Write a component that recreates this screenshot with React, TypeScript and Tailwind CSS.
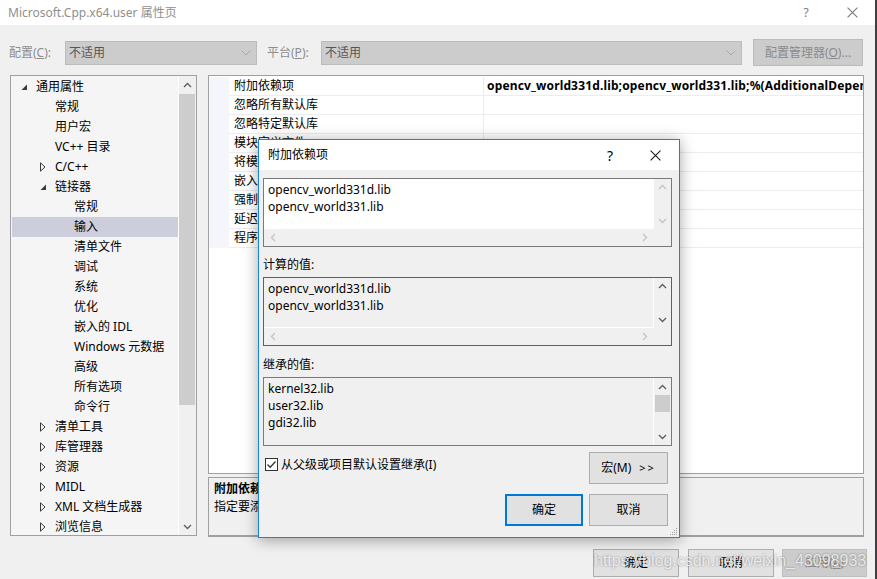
import React from "react";

const FONT = "font-['Noto_Sans','Noto_Sans_CJK_SC',sans-serif]";

function ChevUp({ color }: { color: string }) {
  return (
    <svg width="9" height="6" viewBox="0 0 9 6">
      <path d="M1 5L4.5 1.5L8 5" fill="none" stroke={color} strokeWidth="1.4" />
    </svg>
  );
}
function ChevDown({ color }: { color: string }) {
  return (
    <svg width="9" height="6" viewBox="0 0 9 6">
      <path d="M1 1L4.5 4.5L8 1" fill="none" stroke={color} strokeWidth="1.4" />
    </svg>
  );
}
function ChevLeft({ color }: { color: string }) {
  return (
    <svg width="6" height="9" viewBox="0 0 6 9">
      <path d="M5 1L1.5 4.5L5 8" fill="none" stroke={color} strokeWidth="1.4" />
    </svg>
  );
}
function ChevRight({ color }: { color: string }) {
  return (
    <svg width="6" height="9" viewBox="0 0 6 9">
      <path d="M1 1L4.5 4.5L1 8" fill="none" stroke={color} strokeWidth="1.4" />
    </svg>
  );
}
function SelectChev() {
  return (
    <svg width="10" height="6" viewBox="0 0 10 6">
      <path d="M0.5 0.5L5 5L9.5 0.5" fill="none" stroke="#a8a8a8" strokeWidth="1" />
    </svg>
  );
}
function CloseX({ color, size }: { color: string; size: number }) {
  return (
    <svg width={size} height={size} viewBox="0 0 10 10">
      <path d="M0.5 0.5L9.5 9.5M9.5 0.5L0.5 9.5" fill="none" stroke={color} strokeWidth="1" />
    </svg>
  );
}

type TreeItem = { label: string; level: number; icon?: "open" | "closed"; sel?: boolean };

const tree: TreeItem[] = [
  { label: "通用属性", level: 0, icon: "open" },
  { label: "常规", level: 1 },
  { label: "用户宏", level: 1 },
  { label: "VC++ 目录", level: 1 },
  { label: "C/C++", level: 1, icon: "closed" },
  { label: "链接器", level: 1, icon: "open" },
  { label: "常规", level: 2 },
  { label: "输入", level: 2, sel: true },
  { label: "清单文件", level: 2 },
  { label: "调试", level: 2 },
  { label: "系统", level: 2 },
  { label: "优化", level: 2 },
  { label: "嵌入的 IDL", level: 2 },
  { label: "Windows 元数据", level: 2 },
  { label: "高级", level: 2 },
  { label: "所有选项", level: 2 },
  { label: "命令行", level: 2 },
  { label: "清单工具", level: 1, icon: "closed" },
  { label: "库管理器", level: 1, icon: "closed" },
  { label: "资源", level: 1, icon: "closed" },
  { label: "MIDL", level: 1, icon: "closed" },
  { label: "XML 文档生成器", level: 1, icon: "closed" },
  { label: "浏览信息", level: 1, icon: "closed" },
];

const pads = ["pl-[9px]", "pl-[28px]", "pl-[47px]"];

const props = [
  "附加依赖项",
  "忽略所有默认库",
  "忽略特定默认库",
  "模块定义文件",
  "将模块添加到程序集",
  "嵌入托管资源文件",
  "强制符号引用",
  "延迟加载的 DLL",
  "程序集链接资源",
];

function TreeIcon({ kind }: { kind?: "open" | "closed" }) {
  if (kind === "open")
    return (
      <svg width="7" height="7" viewBox="0 0 7 7">
        <polygon points="6,0.5 6,6 0.5,6" fill="#3a3a3a" />
      </svg>
    );
  if (kind === "closed")
    return (
      <svg width="6" height="10" viewBox="0 0 6 10">
        <polygon points="0.5,0.8 5,5 0.5,9.2" fill="none" stroke="#3a3a3a" strokeWidth="1" />
      </svg>
    );
  return null;
}

function Btn({ children, className }: { children: React.ReactNode; className: string }) {
  return (
    <div className={`flex items-center justify-center bg-[#e1e1e1] border border-[#adadad] text-[12px] text-black ${className}`}>
      {children}
    </div>
  );
}

export default function App() {
  return (
    <div className={`w-[877px] h-[579px] flex bg-[#f0f0f0] text-[12px] text-black relative overflow-hidden ${FONT}`}>
      <div className="w-[875px] flex flex-col">
        {/* Title bar */}
        <div className="h-[25px] bg-white flex items-center pl-[8px] text-[#8f8f8f]">
          <span className="flex-1">Microsoft.Cpp.x64.user 属性页</span>
          <span className="w-[12px] text-center text-[#7a7a7a]">?</span>
          <span className="ml-[35px] mr-[17px] flex items-center">
            <CloseX color="#7a7a7a" size={11} />
          </span>
        </div>

        {/* Toolbar */}
        <div className="h-[50px] flex items-start pt-[14px] pl-[9px]">
          <div className="h-[27px] flex items-center">
            <span className="w-[56px] text-[#8d8d8d]">
              配置(<u>C</u>):
            </span>
            <div className="w-[192px] h-[24px] bg-[#cccccc] border border-[#bcbcbc] flex items-center pl-[3px] pr-[5px] text-[#555555]">
              <span className="flex-1">不适用</span>
              <SelectChev />
            </div>
            <span className="ml-[10px] w-[54px] text-[#8d8d8d]">
              平台(<u>P</u>):
            </span>
            <div className="w-[421px] h-[24px] bg-[#cccccc] border border-[#bcbcbc] flex items-center pl-[3px] pr-[5px] text-[#555555]">
              <span className="flex-1">不适用</span>
              <SelectChev />
            </div>
            <div className="ml-[11px] w-[110px] h-[27px] bg-[#cccccc] border border-[#bcbcbc] flex items-center justify-center text-[#8a8a8a]">
              配置管理器(<u>O</u>)...
            </div>
          </div>
        </div>

        {/* Content */}
        <div className="h-[462px] flex pl-[10px]">
          {/* Tree */}
          <div className="w-[187px] h-[461px] border border-[#a0a0a0] bg-[#f5f5f5] flex overflow-hidden">
            <div className="flex-1 pt-[1px] overflow-hidden">
              {tree.map((t, i) => (
                <div
                  key={i}
                  className={`h-[20px] ml-[1px] flex items-center whitespace-nowrap ${pads[t.level]} ${t.sel ? "bg-[#cccedb]" : ""}`}
                >
                  <span className="w-[15px] flex items-center">
                    <TreeIcon kind={t.icon} />
                  </span>
                  <span>{t.label}</span>
                </div>
              ))}
            </div>
            <div className="w-[18px] border-l border-white bg-[#f0f0f0] flex flex-col">
              <div className="h-[18px] flex items-center justify-center">
                <ChevUp color="#606060" />
              </div>
              <div className="h-[311px] mr-[1px] bg-[#cdcdcd]" />
              <div className="flex-1" />
              <div className="h-[17px] flex items-center justify-center">
                <ChevDown color="#606060" />
              </div>
            </div>
          </div>

          {/* Right side */}
          <div className="ml-[11px] w-[656px] flex flex-col">
            <div className="h-[399px] border border-[#a0a0a0] bg-white pt-[1px] overflow-hidden">
              {props.map((p, i) => (
                <div key={i} className="flex h-[19px]">
                  <div className="w-[20px] bg-[#f4f6fb]" />
                  <div className="w-[254px] border-b border-[#ececf1] pl-[5px] flex items-center whitespace-nowrap">
                    {p}
                  </div>
                  <div className="flex-1 min-w-0 border-l border-b border-[#ececf1] pl-[3px] flex items-center whitespace-nowrap overflow-hidden font-bold tracking-[0.15px]">
                    {i === 0 ? "opencv_world331d.lib;opencv_world331.lib;%(AdditionalDependencies)" : ""}
                  </div>
                </div>
              ))}
            </div>
            <div className="mt-[3px] h-[60px] border border-[#a0a0a0] border-b-2 pl-[5px] pt-[2px] leading-[18px] whitespace-nowrap overflow-hidden">
              <div className="font-bold">附加依赖项</div>
              <div>指定要添加到链接命令行的附加项。[例如 kernel32.lib]</div>
            </div>
          </div>
        </div>

        {/* Bottom buttons */}
        <div className="h-[42px] flex justify-end items-start pt-[12px] pr-[8px]">
          <Btn className="w-[86px] h-[28px]">确定</Btn>
          <Btn className="ml-[9px] w-[86px] h-[28px]">取消</Btn>
          <div className="ml-[8px] w-[85px] h-[28px] bg-[#cccccc] border border-[#bfbfbf] flex items-center justify-center text-[#8a8a8a]">
            应用(<u>A</u>)
          </div>
        </div>
      </div>
      <div className="w-[2px] h-full bg-[#3f3f3f]" />

      {/* Dialog */}
      <div className="absolute left-[258px] top-[139px] w-[422px] h-[399px] border border-[#1883d7] bg-[#f0f0f0] shadow-[0_2px_14px_rgba(0,0,0,0.35)] flex flex-col">
        <div className="h-[30px] bg-white flex items-center pl-[9px]">
          <span className="flex-1">附加依赖项</span>
          <span className="w-[12px] text-center text-[14px]">?</span>
          <span className="ml-[34px] mr-[18px] flex items-center">
            <CloseX color="#1a1a1a" size={11} />
          </span>
        </div>
        <div className="px-[4px] flex flex-col">
          {/* Box 1 */}
          <div className="mt-[8px] w-[409px] h-[69px] border border-[#7a7a7a] flex flex-col">
            <div className="flex h-[50px]">
              <div className="flex-1 bg-white pl-[4px] pt-[2px] leading-[17px]">
                <div>opencv_world331d.lib</div>
                <div>opencv_world331.lib</div>
              </div>
              <div className="w-[17px] bg-[#f0f0f0] flex flex-col items-center justify-between py-[5px]">
                <ChevUp color="#c4c4c4" />
                <ChevDown color="#c4c4c4" />
              </div>
            </div>
            <div className="flex h-[17px]">
              <div className="flex-1 bg-[#f0f0f0] flex items-center justify-between px-[6px]">
                <ChevLeft color="#c4c4c4" />
                <ChevRight color="#c4c4c4" />
              </div>
              <div className="w-[17px] bg-[#f0f0f0]" />
            </div>
          </div>

          <div className="h-[30px] pt-[6px] flex items-center">计算的值:</div>

          {/* Box 2 */}
          <div className="w-[409px] h-[69px] border border-[#0078d7] flex flex-col">
            <div className="flex h-[50px]">
              <div className="flex-1 bg-[#f0f0f0] border-r border-b border-white pl-[4px] pt-[2px] leading-[17px]">
                <div>opencv_world331d.lib</div>
                <div>opencv_world331.lib</div>
              </div>
              <div className="w-[17px] bg-[#f0f0f0] flex flex-col items-center justify-between py-[5px]">
                <ChevUp color="#606060" />
                <ChevDown color="#606060" />
              </div>
            </div>
            <div className="flex h-[17px]">
              <div className="flex-1 bg-[#f0f0f0] flex items-center justify-between px-[6px]">
                <ChevLeft color="#c4c4c4" />
                <ChevRight color="#c4c4c4" />
              </div>
              <div className="w-[17px] bg-[#f0f0f0]" />
            </div>
          </div>

          <div className="h-[31px] pt-[7px] flex items-center">继承的值:</div>

          {/* Box 3 */}
          <div className="w-[409px] h-[69px] border border-[#7a7a7a] flex">
            <div className="flex-1 bg-[#f0f0f0] border-r border-white pl-[4px] pt-[2px] leading-[17px]">
              <div>kernel32.lib</div>
              <div>user32.lib</div>
              <div>gdi32.lib</div>
            </div>
            <div className="w-[17px] bg-[#f0f0f0] flex flex-col">
              <div className="h-[17px] flex items-center justify-center">
                <ChevUp color="#606060" />
              </div>
              <div className="h-[17px] mx-[1px] bg-[#cdcdcd]" />
              <div className="flex-1" />
              <div className="h-[17px] flex items-center justify-center">
                <ChevDown color="#606060" />
              </div>
            </div>
          </div>

          {/* Checkbox + macro */}
          <div className="mt-[6px] w-[409px] h-[32px] flex pr-[4px]">
            <div className="flex-1 flex items-start pt-[6px] pl-[2px]">
              <svg width="13" height="13" viewBox="0 0 13 13">
                <rect x="0.5" y="0.5" width="12" height="12" fill="white" stroke="#333333" />
                <path d="M2.5 6.5L5.2 9.2L10.5 3.5" fill="none" stroke="#333333" strokeWidth="1.3" />
              </svg>
              <span className="ml-[3px] leading-[13px]">从父级或项目默认设置继承(I)</span>
            </div>
            <Btn className="w-[79px] h-[32px]">
              宏(M)<span className="ml-[8px] tracking-[2px] text-[11px]">&gt;&gt;</span>
            </Btn>
          </div>
          <div className="mt-[10px] w-[409px] h-[32px] flex justify-end pr-[4px]">
            <div className="w-[78px] h-[32px] flex items-center justify-center bg-[#e1e1e1] border-2 border-[#0078d7]">
              确定
            </div>
            <Btn className="ml-[6px] w-[79px] h-[32px]">取消</Btn>
          </div>
        </div>
        <svg className="absolute right-[1px] bottom-[1px]" width="9" height="9" viewBox="0 0 9 9">
          <rect x="7" y="1" width="1" height="1" fill="#a0a0a0" />
          <rect x="5" y="3" width="1" height="1" fill="#a0a0a0" />
          <rect x="7" y="3" width="1" height="1" fill="#a0a0a0" />
          <rect x="3" y="5" width="1" height="1" fill="#a0a0a0" />
          <rect x="5" y="5" width="1" height="1" fill="#a0a0a0" />
          <rect x="7" y="5" width="1" height="1" fill="#a0a0a0" />
          <rect x="1" y="7" width="1" height="1" fill="#a0a0a0" />
          <rect x="3" y="7" width="1" height="1" fill="#a0a0a0" />
          <rect x="5" y="7" width="1" height="1" fill="#a0a0a0" />
          <rect x="7" y="7" width="1" height="1" fill="#a0a0a0" />
        </svg>
      </div>

      {/* Watermark */}
      <div className="absolute left-[594px] top-[551px] leading-[20px] text-[16px] font-['Liberation_Sans',sans-serif] text-[rgba(255,255,255,0.8)] [text-shadow:0_0_2px_rgba(0,0,0,0.45)] whitespace-nowrap">
        https://blog.csdn.net/weixin_43098933
      </div>
    </div>
  );
}
